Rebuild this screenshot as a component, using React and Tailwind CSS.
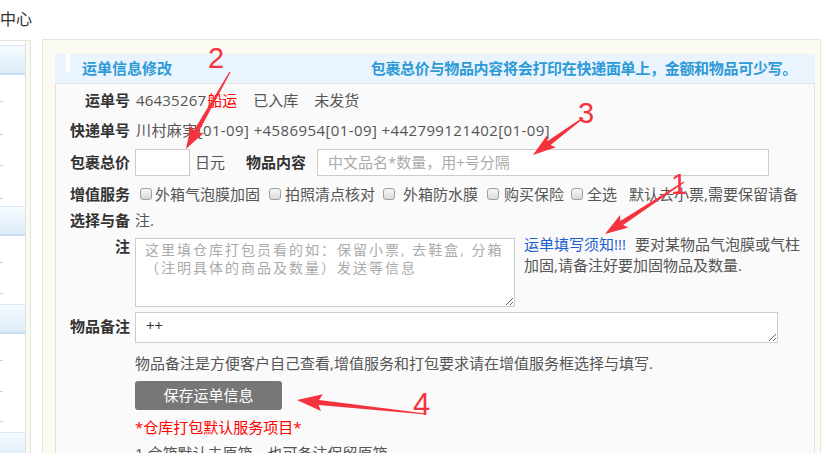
import React from "react";

const arrow = (x1, y1, x2, y2, hl, hw, sw) => {
  const len = Math.hypot(x2 - x1, y2 - y1);
  const dx = (x2 - x1) / len;
  const dy = (y2 - y1) / len;
  const nx = -dy;
  const ny = dx;
  const bx = x2 - dx * hl;
  const by = y2 - dy * hl;
  const pts = [
    [x1 + nx * 0.6, y1 + ny * 0.6],
    [bx + (nx * sw) / 2, by + (ny * sw) / 2],
    [bx + (nx * hw) / 2 - dx * 3, by + (ny * hw) / 2 - dy * 3],
    [x2, y2],
    [bx - (nx * hw) / 2 - dx * 3, by - (ny * hw) / 2 - dy * 3],
    [bx - (nx * sw) / 2, by - (ny * sw) / 2],
    [x1 - nx * 0.6, y1 - ny * 0.6],
  ];
  return pts.map((p) => p.map((v) => v.toFixed(1)).join(",")).join(" ");
};

const Head = () => (
  <div className="h-[30px] border-t border-[#d9e9f7] border-b-2 border-b-[#c6def3] bg-linear-to-b from-[#f6fbff] to-[#dcecf9]" />
);

const Item = ({ className }) => (
  <div className={`${className} flex items-end`}>
    <span className="w-[3px] h-px bg-[#cfcfcf]" />
  </div>
);

const Sidebar = () => (
  <div className="mt-[2px] w-[31px] h-[413px] border-t border-r border-[#e4e4da] bg-[#fafaef]">
    <div className="w-[26px] h-full bg-white border-r border-[#d7e3ee] pt-[4px] overflow-hidden">
      <Head />
      <Item className="h-[27px]" />
      <Item className="h-[33px]" />
      <Item className="h-[31px]" />
      <Item className="h-[33px]" />
      <div className="h-[7px]" />
      <Head />
      <Item className="h-[27px]" />
      <Item className="h-[31px]" />
      <div className="h-[10px]" />
      <Head />
      <Item className="h-[27px]" />
      <Item className="h-[31px]" />
      <Item className="h-[30px]" />
      <div className="h-[10px]" />
      <Head />
    </div>
  </div>
);

const Box = ({ className }) => (
  <span
    className={`${className} inline-block w-[12px] h-[12px] shrink-0 rounded-[3px] border border-[#a0a0a0] bg-linear-to-b from-[#f7f7f7] to-[#d9d9d9]`}
  />
);

const Label = ({ children, className }) => (
  <div className={`${className} w-[74px] shrink-0 text-right font-bold text-[#333]`}>{children}</div>
);

export default function App() {
  return (
    <div className="relative w-[825px] h-[453px] overflow-hidden bg-white text-[15px] text-[#555] font-['Open_Sans','Noto_Sans_CJK_SC',sans-serif]">
      <div className="h-[38px] flex items-center text-[16px] text-[#333]">中心</div>

      <div className="flex">
        <Sidebar />

        <div className="ml-[11px] mt-[1px] w-[779px] h-[414px] border-t border-l border-r border-[#e5e5da] bg-[#fbfbf1] pl-[12px] pr-[5px] pt-[14px]">
          <div className="relative h-[29px] bg-[#e9f4fc] flex items-center justify-between">
            <span className="absolute left-[11px] top-0 w-[4px] h-[18px] bg-white" />
            <span className="ml-[27px] font-bold text-[#2e9ad8]">运单信息修改</span>
            <span className="mr-[18px] font-bold tracking-[-0.3px] text-[#2e9ad8]">
              包裹总价与物品内容将会打印在快递面单上，金额和物品可少写。
            </span>
          </div>

          <div className="h-[371px] border-t border-l border-r border-[#e2e2e2] bg-[#fafafa]">
            <div className="mt-px h-[30px] flex items-center">
              <Label>运单号</Label>
              <span className="ml-[6px] tracking-[0.2px]">46435267</span>
              <span className="ml-px text-[#f00]">船运</span>
              <span className="ml-[16px]">已入库</span>
              <span className="ml-[16px]">未发货</span>
            </div>

            <div className="h-[31px] flex items-center">
              <Label>快递单号</Label>
              <span className="ml-[6px] tracking-[0.4px]">川村麻実[01-09] +4586954[01-09] +442799121402[01-09]</span>
            </div>

            <div className="h-[32px] flex items-center">
              <Label>包裹总价</Label>
              <input className="ml-[5px] w-[55px] h-[27px] border border-[#ccc] bg-white outline-none" />
              <span className="ml-[5px]">日元</span>
              <span className="ml-[21px] font-bold text-[#333]">物品内容</span>
              <input
                placeholder="中文品名*数量，用+号分隔"
                className="ml-[11px] w-[452px] h-[27px] border border-[#ccc] bg-white px-[10px] outline-none placeholder:text-[#aaa]"
              />
            </div>

            <div className="pt-[3px] flex items-start leading-[26px]">
              <Label>
                增值服务
                <br />
                选择与备
                <br />注
              </Label>
              <div className="ml-[5px]">
                <div className="h-[26px] flex items-center whitespace-nowrap">
                  <Box className="ml-[5px]" />
                  <span className="ml-[3px]">外箱气泡膜加固</span>
                  <Box className="ml-[9px]" />
                  <span className="ml-[4px]">拍照清点核对</span>
                  <Box className="ml-[8px]" />
                  <span className="ml-[8px]">外箱防水膜</span>
                  <Box className="ml-[9px]" />
                  <span className="ml-[5px]">购买保险</span>
                  <Box className="ml-[7px]" />
                  <span className="ml-[4px]">全选</span>
                  <span className="ml-[12px]">默认去小票,需要保留请备</span>
                </div>
                <div className="h-[26px]">注.</div>
                <div className="mt-[5px] flex items-start">
                  <textarea
                    placeholder={"这里填仓库打包员看的如：保留小票, 去鞋盒, 分箱\n（注明具体的商品及数量）发送等信息"}
                    className="w-[380px] h-[69px] border border-[#ccc] bg-white pl-[9px] pt-[2px] text-[14px] leading-[18px] tracking-[2px] outline-none placeholder:text-[#aaa]"
                  />
                  <div className="ml-[9px] -mt-[4px] leading-[21px]">
                    <span className="text-[#1b5fd3]">运单填写须知!!!</span>
                    <span className="ml-[9px]">要对某物品气泡膜或气柱</span>
                    <br />
                    加固,请备注好要加固物品及数量.
                  </div>
                </div>
              </div>
            </div>

            <div className="mt-[5px] flex items-start">
              <Label className="pt-px leading-[26px]">物品备注</Label>
              <textarea
                defaultValue="++"
                className="ml-[5px] w-[643px] h-[31px] border border-[#ccc] bg-white pl-[10px] pt-[3px] leading-[18px] text-[#333] outline-none"
              />
            </div>

            <div className="pl-[79px]">
              <div className="mt-[7px] leading-[26px]">
                物品备注是方便客户自己查看,增值服务和打包要求请在增值服务框选择与填写.
              </div>
              <button className="mt-[5px] w-[147px] h-[29px] rounded-[3px] bg-[#777] text-white">保存运单信息</button>
              <div className="mt-[4px] leading-[26px] text-[#f00]">*仓库打包默认服务项目*</div>
              <div className="leading-[26px]">1.合箱默认去原箱，也可备注保留原箱。</div>
            </div>
          </div>
        </div>
      </div>

      <svg className="absolute inset-0 pointer-events-none" width="825" height="453">
        <g fill="#f5333f">
          <polygon points={arrow(230, 72, 186, 149, 20, 15, 5)} />
          <polygon points={arrow(583, 118, 533, 155, 20, 15, 5)} />
          <polygon points={arrow(684, 182, 605, 234, 20, 15, 5)} />
          <polygon points={arrow(426, 414, 297, 400, 22, 17, 5)} />
        </g>
        <g fill="#f5333f" fontFamily="Liberation Sans, sans-serif" fontSize="29">
          <text x="208" y="68">2</text>
          <text x="578" y="123">3</text>
          <text x="671" y="194">1</text>
          <text x="413" y="415" fontSize="31">4</text>
        </g>
      </svg>
    </div>
  );
}
